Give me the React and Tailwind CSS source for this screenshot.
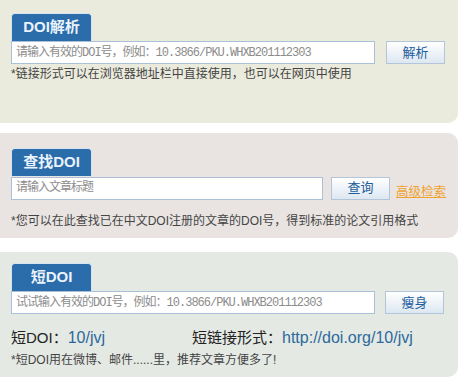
import React from 'react'

const cjk = "font-['Liberation_Sans','Noto_Sans_CJK_SC',sans-serif]";
const mono = "font-['Liberation_Mono','Noto_Sans_CJK_SC',monospace]";

function Tab({ label }) {
	return (
		<div className={`w-[81px] h-[28px] rounded-t-[4px] bg-[#2b6cab] border border-b-0 border-[#d6e4f1] flex items-center justify-center text-[15px] font-bold text-[#eaf3fc] ${cjk}`}>
			{label}
		</div>
	);
}

function Input({ width, placeholder }) {
	return (
		<input
			type="text"
			placeholder={placeholder}
			className={`h-[23px] ${width} border border-[#a9c0d6] bg-white px-[4px] text-[12px] tracking-[-1px] placeholder:tracking-[-1px] placeholder:text-[#8c8c8c] outline-none ${mono}`}
		/>
	);
}

function Button({ label, className = '' }) {
	return (
		<button className={`h-[23px] w-[59px] border border-[#b3c6d9] bg-gradient-to-b from-white to-[#dde7f1] text-[13px] text-[#1c5d9c] ${cjk} ${className}`}>
			{label}
		</button>
	);
}

export default function App() {
	return (
		<div className={`w-[467px] h-[384px] bg-white overflow-hidden ${cjk}`}>
			{/* DOI解析 */}
			<div className="w-[458px] h-[123px] bg-[#ebebdd] rounded-br-[10px] pt-[13px] pl-[11px]">
				<Tab label="DOI解析" />
				<div className="flex items-center">
					<Input width="w-[364px]" placeholder="请输入有效的DOI号，例如：10.3866/PKU.WHXB201112303" />
					<Button label="解析" className="ml-[11px]" />
				</div>
				<p className="mt-[2px] text-[12px] leading-[16px] text-[#444]">*链接形式可以在浏览器地址栏中直接使用，也可以在网页中使用</p>
			</div>

			{/* 查找DOI */}
			<div className="mt-[10px] w-[458px] h-[105px] bg-[#e9e4e2] rounded-r-[10px] pt-[15px] pl-[11px]">
				<Tab label="查找DOI" />
				<div className="flex items-center">
					<Input width="w-[312px]" placeholder="请输入文章标题" />
					<Button label="查询" className="ml-[8px]" />
					<a className="ml-[6px] mt-[8px] text-[12.5px] leading-[16px] text-[#f0a22e] underline">高级检索</a>
				</div>
				<p className="mt-[13px] text-[12px] leading-[16px] text-[#444]">*您可以在此查找已在中文DOI注册的文章的DOI号，得到标准的论文引用格式</p>
			</div>

			{/* 短DOI */}
			<div className="mt-[14px] w-[458px] h-[125px] bg-[#e4e9e4] rounded-r-[10px] pt-[11px] pl-[11px]">
				<Tab label="短DOI" />
				<div className="flex items-center">
					<Input width="w-[364px]" placeholder="试试输入有效的DOI号，例如：10.3866/PKU.WHXB201112303" />
					<Button label="瘦身" className="ml-[10px]" />
				</div>
				<div className="mt-[14px] flex text-[15px] leading-[20px] text-[#222]">
					<div className="w-[181px]">短DOI：<span className="text-[16px] text-[#2d6a9c]">10/jvj</span></div>
					<div>短链接形式：<span className="text-[16px] text-[#2d6a9c]">http://doi.org/10/jvj</span></div>
				</div>
				<p className="mt-[4px] text-[12px] leading-[16px] text-[#444]">*短DOI用在微博、邮件......里，推荐文章方便多了!</p>
			</div>
		</div>
	)
}
